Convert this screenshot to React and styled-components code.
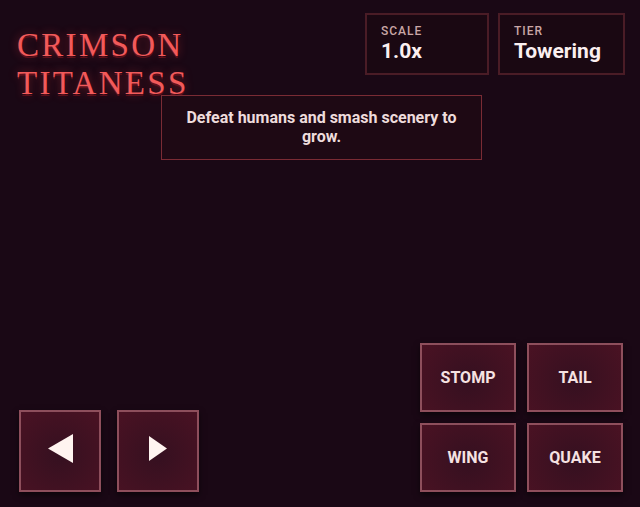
import styled, { createGlobalStyle } from "styled-components";

const GlobalStyle = createGlobalStyle`
  html, body {
    margin: 0;
    padding: 0;
    background: #1a0815;
  }
  body {
    font-family: Roboto, "Liberation Sans", sans-serif;
  }
`;

const stats = [
  { label: "Scale", value: "1.0x", width: 124 },
  { label: "Tier", value: "Towering", width: 127 },
];

const actions = ["STOMP", "TAIL", "WING", "QUAKE"];

// solid play-style triangles for the movement pad
const arrows = {
  left: { w: 25, h: 29, points: "0,14.5 25,0 25,29" },
  right: { w: 18, h: 25, points: "0,0 18,12.5 0,25" },
};

function Arrow({ dir }) {
  const a = arrows[dir];
  return (
    <svg width={a.w} height={a.h} viewBox={`0 0 ${a.w} ${a.h}`}>
      <polygon points={a.points} fill="#fff4f0" />
    </svg>
  );
}

function App() {
  return (
    <Screen>
      <GlobalStyle />
      <TopRow>
        <TitleBlock>
          <Title>
            CRIMSON
            <br />
            TITANESS
          </Title>
        </TitleBlock>
        <Stats>
          {stats.map((s) => (
            <StatBox key={s.label} $width={s.width}>
              <StatLabel>{s.label}</StatLabel>
              <StatValue>{s.value}</StatValue>
            </StatBox>
          ))}
        </Stats>
      </TopRow>
      <Objective>Defeat humans and smash scenery to grow.</Objective>
      <Controls>
        <DPad>
          <PadButton aria-label="left">
            <Arrow dir="left" />
          </PadButton>
          <PadButton aria-label="right">
            <Arrow dir="right" />
          </PadButton>
        </DPad>
        <ActionGrid>
          {actions.map((a) => (
            <ActionButton key={a}>{a}</ActionButton>
          ))}
        </ActionGrid>
      </Controls>
    </Screen>
  );
}

const Screen = styled.div`
  width: 640px;
  height: 507px;
  overflow: hidden;
  background: #1a0815;
  display: flex;
  flex-direction: column;
`;

const TopRow = styled.div`
  display: flex;
  justify-content: space-between;
  align-items: flex-start;
  padding: 13px 15px 0 17px;
`;

const TitleBlock = styled.div`
  padding-top: 13px;
`;

const Title = styled.h1`
  margin: 0;
  font-family: "Liberation Serif", serif;
  font-weight: 400;
  font-size: 33px;
  line-height: 38px;
  letter-spacing: 2.3px;
  color: #f25a5a;
  text-shadow: 0 2px 0 rgba(110, 18, 28, 0.75), 0 0 10px rgba(255, 60, 60, 0.4);
`;

const Stats = styled.div`
  display: flex;
  gap: 9px;
`;

const StatBox = styled.div`
  box-sizing: border-box;
  width: ${(p) => p.$width}px;
  height: 62px;
  padding: 9px 14px 0;
  background: #1a0812;
  border: 2px solid #4a1c26;
`;

const StatLabel = styled.div`
  font-size: 12px;
  font-weight: 500;
  letter-spacing: 1px;
  text-transform: uppercase;
  color: #c9a6a6;
  line-height: 14px;
`;

const StatValue = styled.div`
  font-size: 21px;
  font-weight: 700;
  color: #fbeff0;
  line-height: 26px;
`;

const Objective = styled.div`
  box-sizing: border-box;
  align-self: flex-start;
  margin: -7px 0 0 161px;
  width: 321px;
  height: 65px;
  padding: 12px 20px 0;
  background: #1e0914;
  border: 1.5px solid #7a2b34;
  color: #eedcdc;
  font-size: 16px;
  font-weight: 700;
  line-height: 19px;
  text-align: center;
`;

const Controls = styled.div`
  margin-top: auto;
  display: flex;
  justify-content: space-between;
  align-items: flex-end;
  padding: 0 17px 15px 19px;
`;

const DPad = styled.div`
  display: flex;
  gap: 16px;
`;

const buttonSkin = `
  box-sizing: border-box;
  display: flex;
  align-items: center;
  justify-content: center;
  padding: 0;
  border: 2px solid rgba(214, 140, 150, 0.5);
  background: radial-gradient(circle at 50% 55%, #351020 0%, #4a1223 100%);
  box-shadow: 0 3px 6px rgba(0, 0, 0, 0.55);
  cursor: pointer;
`;

const PadButton = styled.button`
  ${buttonSkin}
  width: 82px;
  height: 82px;

  svg {
    margin-bottom: 6px;
  }
`;

const ActionGrid = styled.div`
  display: grid;
  grid-template-columns: 96px 96px;
  grid-auto-rows: 69px;
  gap: 11px;
`;

const ActionButton = styled.button`
  ${buttonSkin}
  font-family: Roboto, "Liberation Sans", sans-serif;
  font-size: 16px;
  font-weight: 700;
  color: #f6e2e2;
`;

export default App;
